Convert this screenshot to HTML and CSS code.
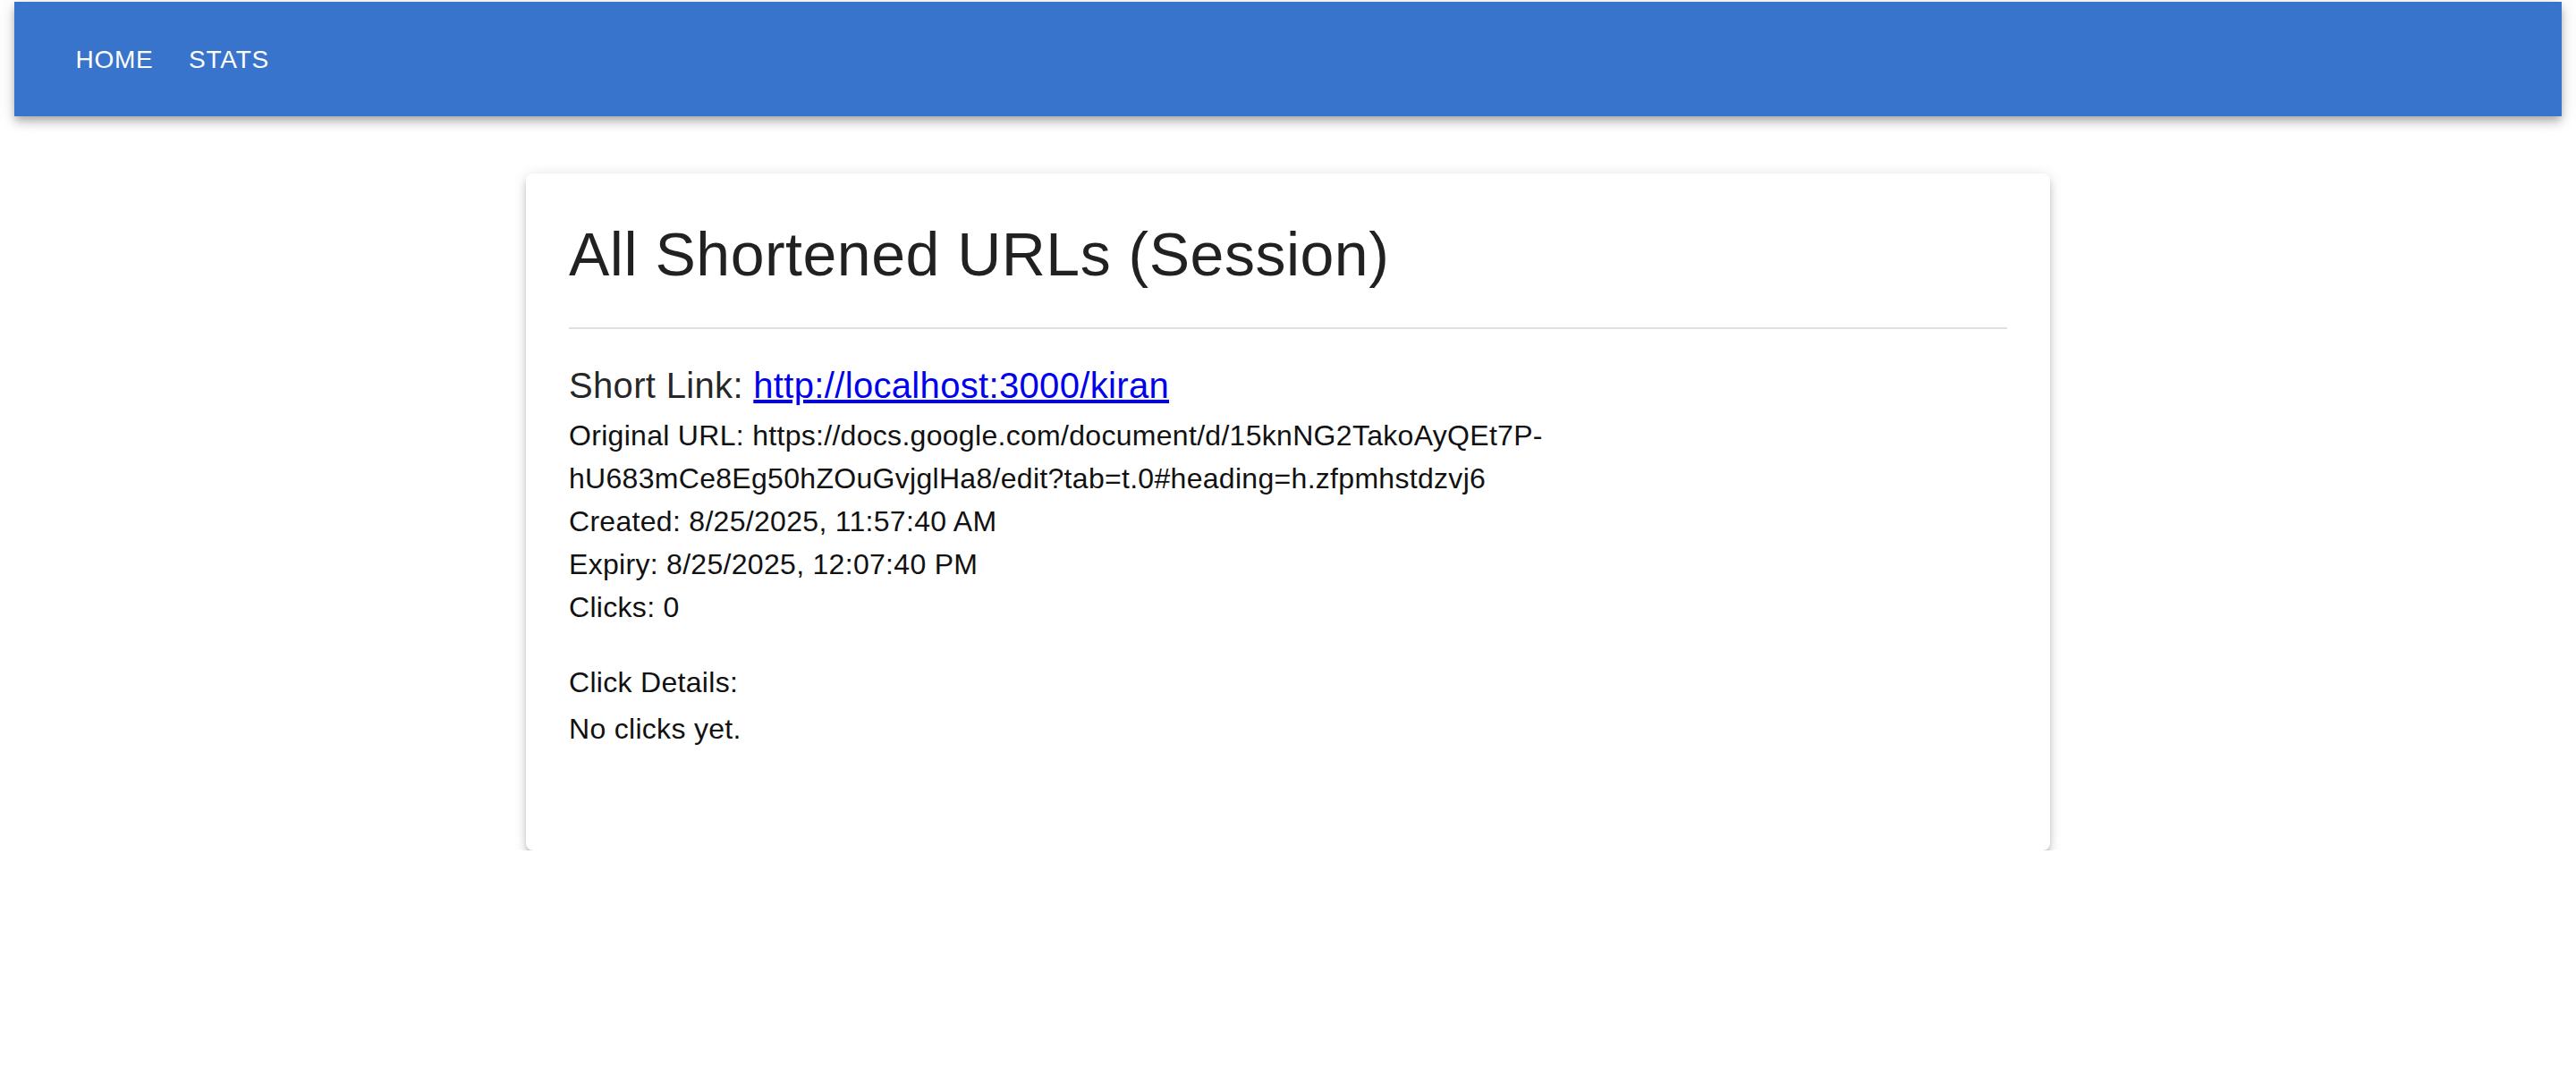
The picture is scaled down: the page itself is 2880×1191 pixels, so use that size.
FILE: index.html
```html
<!DOCTYPE html>
<html lang="en">
<head>
<meta charset="utf-8">
<title>URL Shortener</title>
<link rel="stylesheet" href="styles.css">
</head>
<body>
<div class="page">
  <header class="appbar">
    <nav class="toolbar">
      <a class="nav-btn" href="#">Home</a>
      <a class="nav-btn" href="#">Stats</a>
    </nav>
  </header>
  <main class="container">
    <section class="card">
      <h1 class="title">All Shortened URLs (Session)</h1>
      <hr class="divider">
      <div class="item">
        <h2 class="short-link">Short Link: <a class="link" href="#">http://localhost:3000/kiran</a></h2>
        <p class="line">Original URL: https://docs.google.com/document/d/15knNG2TakoAyQEt7P-hU683mCe8Eg50hZOuGvjglHa8/edit?tab=t.0#heading=h.zfpmhstdzvj6</p>
        <p class="line">Created: 8/25/2025, 11:57:40 AM</p>
        <p class="line">Expiry: 8/25/2025, 12:07:40 PM</p>
        <p class="line">Clicks: 0</p>
        <h3 class="subhead">Click Details:</h3>
        <p class="line">No clicks yet.</p>
      </div>
    </section>
  </main>
</div>
</body>
</html>
```

FILE: styles.css
```css
html, body {
  margin: 0;
  padding: 0;
  background: #ffffff;
}

body {
  font-family: "Liberation Sans", Arial, sans-serif;
  color: rgba(0, 0, 0, 0.87);
}

.page {
  padding: 2px 16px 0;
}

.appbar {
  height: 128px;
  background: #3874cb;
  box-shadow: 0 4px 8px -2px rgba(0, 0, 0, 0.2), 0 8px 10px 0 rgba(0, 0, 0, 0.14), 0 2px 20px 0 rgba(0, 0, 0, 0.12);
  display: flex;
  align-items: center;
}

.toolbar {
  display: flex;
  align-items: center;
  padding: 0 48px;
}

.nav-btn {
  display: inline-flex;
  justify-content: center;
  align-items: center;
  min-width: 128px;
  box-sizing: border-box;
  padding: 12px 16px;
  font-size: 28px;
  line-height: 49px;
  font-weight: 500;
  letter-spacing: 0.8px;
  text-transform: uppercase;
  color: #ffffff;
  text-decoration: none;
}

.container {
  max-width: 1800px;
  box-sizing: border-box;
  margin: 64px auto 0;
  padding: 0 48px;
}

.card {
  background: #ffffff;
  border-radius: 8px;
  padding: 48px;
  box-shadow: 0 6px 6px -4px rgba(0, 0, 0, 0.22), 0 6px 8px 0 rgba(0, 0, 0, 0.15), 0 2px 16px 0 rgba(0, 0, 0, 0.12);
}

.title {
  margin: 0 0 40px;
  font-size: 68px;
  line-height: 84px;
  font-weight: 400;
  letter-spacing: 0.5px;
  color: rgba(0, 0, 0, 0.87);
}

.divider {
  margin: 0 0 31px;
  border: 0;
  height: 2px;
  background: #e0e0e0;
}

.item {
  margin-bottom: 64px;
}

.short-link {
  margin: 0;
  font-size: 40px;
  line-height: 64px;
  font-weight: 400;
  letter-spacing: 0.33px;
  color: rgba(0, 0, 0, 0.87);
}

.link {
  color: #0000ee;
  text-decoration: underline;
}

.line {
  margin: 0;
  font-size: 32px;
  line-height: 48px;
  letter-spacing: 0.3px;
  color: #111111;
}

.subhead {
  margin: 32px 0 0;
  font-size: 32px;
  line-height: 56px;
  font-weight: 400;
  letter-spacing: 0.3px;
  color: #111111;
}
```
